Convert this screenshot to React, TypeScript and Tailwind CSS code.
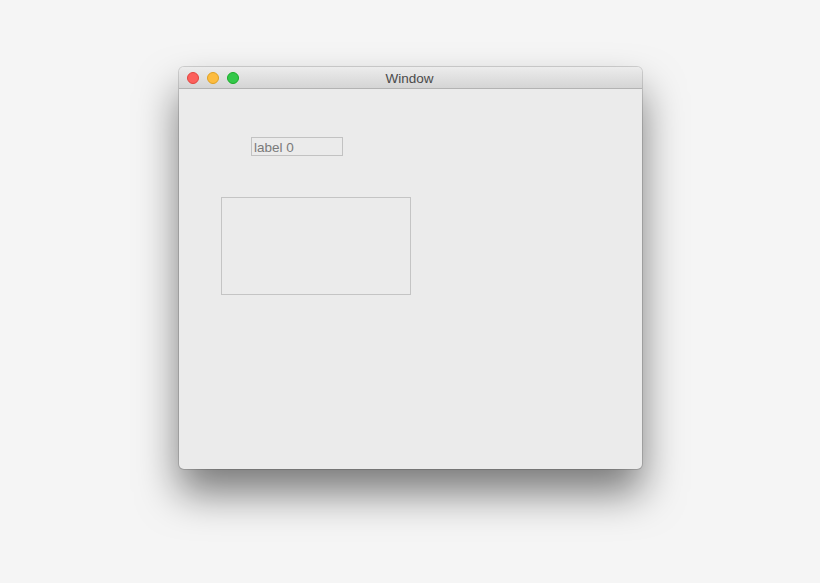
export default function App() {
  return (
    <div className="w-[820px] h-[583px] bg-[#f5f5f5] pt-[67px] pl-[179px] overflow-hidden" style={{ fontFamily: '"Liberation Sans", Arial, sans-serif' }}>
      <div className="w-[463px] h-[402px] rounded-[5px] bg-[#ebebeb] flex flex-col overflow-hidden shadow-[0_24px_40px_rgba(0,0,0,0.5),0_0_0_1px_rgba(0,0,0,0.14)]">
        <div className="relative h-[22px] shrink-0 bg-gradient-to-b from-[#ececec] to-[#d5d5d5] border-b border-[#b3b3b3] flex items-center">
          <div className="flex items-center gap-[8px] pl-[8px]">
            <span className="w-[12px] h-[12px] rounded-full bg-[#fc605c] border border-[#e0443e]" />
            <span className="w-[12px] h-[12px] rounded-full bg-[#fdbc40] border border-[#dea123]" />
            <span className="w-[12px] h-[12px] rounded-full bg-[#34c84a] border border-[#1aab29]" />
          </div>
          <div className="absolute inset-0 flex items-center justify-center text-[13.5px] text-[#4a4a4a] pt-[3px] pr-[2px]">Window</div>
        </div>
        <div className="flex flex-col items-start">
          <div className="ml-[72px] mt-[48px] w-[92px] h-[19px] border border-[#c2c2c2] text-[13.5px] text-[#7a7a7a] leading-[19px] pl-[2px]">label 0</div>
          <div className="ml-[42px] mt-[41px] w-[190px] h-[98px] border border-[#c4c4c4]" />
        </div>
      </div>
    </div>
  );
}
